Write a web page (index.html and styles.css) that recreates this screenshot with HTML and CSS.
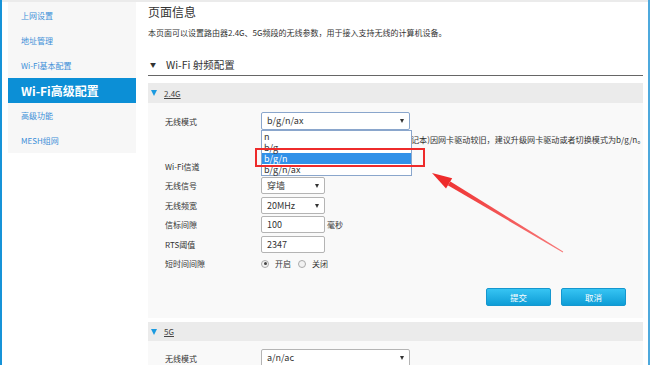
FILE: index.html
```html
<!DOCTYPE html>
<html lang="zh-CN">
<head>
    <meta charset="UTF-8">
    <meta name="viewport" content="width=device-width, initial-scale=1.0">
    <title>Wi-Fi高级配置</title>
    <link rel="stylesheet" href="styles.css">
</head>
<body>
    <div class="page">
        <aside class="sidebar">
            <a class="nav-item">上网设置</a>
            <a class="nav-item">地址管理</a>
            <a class="nav-item">Wi-Fi基本配置</a>
            <a class="nav-item active">Wi-Fi高级配置</a>
            <a class="nav-item">高级功能</a>
            <a class="nav-item">MESH组网</a>
        </aside>

        <main class="content">
            <h1 class="page-title">页面信息</h1>
            <p class="page-desc">本页面可以设置路由器2.4G、5G频段的无线参数，用于接入支持无线的计算机设备。</p>

            <h2 class="section-title"><span class="caret">▼</span>Wi-Fi 射频配置</h2>

            <!-- 2.4G -->
            <div class="band-bar"><span class="band-caret"></span><span class="band-name">2.4G</span></div>
            <div class="band-panel">
                <div class="form-row">
                    <label>无线模式</label>
                    <div class="select wide focused">b/g/n/ax
                        <ul class="dropdown">
                            <li>n</li>
                            <li>b/g</li>
                            <li class="selected">b/g/n</li>
                            <li>b/g/n/ax</li>
                        </ul>
                    </div>
                </div>
                <p class="hint">记本)因网卡驱动较旧，建议升级网卡驱动或者切换模式为b/g/n。</p>
                <div class="form-row spaced">
                    <label>Wi-Fi信道</label>
                    <div class="select wide"></div>
                </div>
                <div class="form-row">
                    <label>无线信号</label>
                    <div class="select narrow">穿墙</div>
                </div>
                <div class="form-row">
                    <label>无线频宽</label>
                    <div class="select narrow">20MHz</div>
                </div>
                <div class="form-row">
                    <label>信标间隙</label>
                    <div class="input">100</div>
                    <span class="unit">毫秒</span>
                </div>
                <div class="form-row">
                    <label>RTS阈值</label>
                    <div class="input">2347</div>
                </div>
                <div class="form-row">
                    <label>短时间间隙</label>
                    <span class="radio checked"><i></i>开启</span>
                    <span class="radio"><i></i>关闭</span>
                </div>
                <div class="actions">
                    <button class="btn">提交</button>
                    <button class="btn">取消</button>
                </div>
            </div>

            <!-- 5G -->
            <div class="band-bar band-5g"><span class="band-caret"></span><span class="band-name">5G</span></div>
            <div class="band-panel band-panel-5g">
                <div class="form-row">
                    <label>无线模式</label>
                    <div class="select wide tall">a/n/ac</div>
                </div>
            </div>
        </main>
    </div>

    <!-- annotation -->
    <div class="mark-box"></div>
    <svg class="mark-arrow" width="650" height="365" viewBox="0 0 650 365">
        <defs>
            <linearGradient id="arrowFade" x1="432" y1="173" x2="563" y2="252" gradientUnits="userSpaceOnUse">
                <stop offset="0" stop-color="#ee2b2b"/>
                <stop offset="1" stop-color="#f77b7b"/>
            </linearGradient>
        </defs>
        <polygon points="432,173 446,188.4 452.2,178.2" fill="#ee2b2b"/>
        <polygon points="447.8,185.2 562.8,252.4 563.2,251.6 450.4,181.4" fill="url(#arrowFade)"/>
    </svg>
</body>
</html>
```

FILE: styles.css
```css
body {
    margin: 0;
    width: 650px;
    height: 365px;
    box-sizing: border-box;
    border-left: 2px solid #1693d8;
    border-right: 2px solid #4ea9dd;
    overflow: hidden;
    position: relative;
    background: #fff;
    font-family: "Noto Sans CJK SC", "Noto Sans", sans-serif;
    color: #333;
}
.page {
    display: flex;
    height: 100%;
    border-top: 2px solid #ebebeb;
}

/* sidebar */
.sidebar {
    flex: none;
    align-self: flex-start;
    width: 128px;
    margin-left: 6px;
    padding-top: 1px;
    background: #f7f7f7;
}
.nav-item {
    display: block;
    height: 25px;
    line-height: 25px;
    padding-left: 13px;
    font-size: 8px;
    color: #3d8fd8;
}
.nav-item.active {
    background: #0c8fd6;
    color: #fff;
    font-size: 12px;
    font-weight: bold;
}

/* main */
.content {
    flex: none;
    width: 495px;
    margin-left: 12px;
}
.page-title {
    margin: 0;
    font-size: 12px;
    font-weight: normal;
    line-height: 20px;
}
.page-desc {
    margin: 5px 0 0;
    font-size: 8px;
    line-height: 12px;
}
.section-title {
    display: flex;
    align-items: center;
    margin: 18px 0 0;
    padding-bottom: 2px;
    border-bottom: 1px solid #666;
    font-size: 10.5px;
    font-weight: normal;
    line-height: 16px;
}
.caret {
    font-size: 6px;
    margin: 0 10px 0 2px;
    color: #333;
}

.band-bar {
    display: flex;
    align-items: center;
    height: 20px;
    margin-top: 7px;
    padding-left: 3px;
    background: #ebebeb;
}
.band-5g {
    height: 19px;
    margin-top: 4px;
}
.band-caret {
    width: 0;
    height: 0;
    border-left: 3.5px solid transparent;
    border-right: 3.5px solid transparent;
    border-top: 6px solid #1b9ae0;
    margin-right: 7px;
}
.band-name {
    font-size: 8px;
    color: #444;
    text-decoration: underline;
}

.band-panel {
    background: #f9f9f9;
    padding: 8.25px 17px 12px;
}
.band-panel-5g {
    padding-top: 7.25px;
}

.form-row {
    display: flex;
    align-items: center;
    height: 19.5px;
    font-size: 8px;
}
.form-row.spaced {
    margin-top: 10.25px;
}
.form-row label {
    flex: none;
    width: 96px;
}

.select,
.input {
    position: relative;
    box-sizing: border-box;
    height: 17px;
    line-height: 15px;
    padding-left: 5px;
    border: 1px solid #b4b4b4;
    border-radius: 2px;
    background: #fff;
    font-size: 9px;
    color: #333;
}
.select::after {
    content: "";
    position: absolute;
    right: 5px;
    top: 6px;
    border-left: 2.5px solid transparent;
    border-right: 2.5px solid transparent;
    border-top: 4px solid #333;
}
.select.wide { width: 149px; }
.select.narrow,
.input { width: 64px; }
.select.tall,
.select.focused { height: 18px; line-height: 16px; }
.select.focused { border-color: #8aa6cc; }

.dropdown {
    position: absolute;
    top: 17px;
    left: -1px;
    z-index: 2;
    width: 149px;
    margin: 0;
    padding: 0;
    list-style: none;
    border: 1px solid #8aa6cc;
    background: #fff;
}
.dropdown li {
    height: 11px;
    line-height: 11px;
    padding-left: 2px;
    font-size: 9px;
}
.dropdown li.selected {
    background: #3191e8;
    color: #fff;
}

.hint {
    margin: 3.25px 0 0 246px;
    font-size: 8.1px;
    line-height: 12px;
    white-space: nowrap;
}

.unit {
    margin-left: 2px;
}

.radio {
    display: inline-flex;
    align-items: center;
    gap: 6px;
    margin-right: 7px;
}
.radio i {
    position: relative;
    box-sizing: border-box;
    width: 8px;
    height: 8px;
    border: 1px solid #aaa;
    border-radius: 50%;
    background: #f2f2f2;
}
.radio.checked i::after {
    content: "";
    position: absolute;
    left: 1.5px;
    top: 1.5px;
    width: 3px;
    height: 3px;
    border-radius: 50%;
    background: #444;
}

.actions {
    display: flex;
    justify-content: flex-end;
    gap: 10px;
    margin-top: 14.75px;
}
.btn {
    width: 65px;
    height: 18px;
    padding: 0;
    border: 1px solid #1597cf;
    border-radius: 2px;
    background: linear-gradient(#36c4f3, #0e9dd6);
    color: #fff;
    font-family: inherit;
    font-size: 8.5px;
}

/* annotation overlay */
.mark-box {
    position: absolute;
    left: 253px;
    top: 148px;
    width: 170px;
    height: 19px;
    box-sizing: border-box;
    border: 2px solid #ee2b2b;
    z-index: 3;
}
.mark-arrow {
    position: absolute;
    left: -2px;
    top: 0;
    z-index: 3;
    pointer-events: none;
}
```
